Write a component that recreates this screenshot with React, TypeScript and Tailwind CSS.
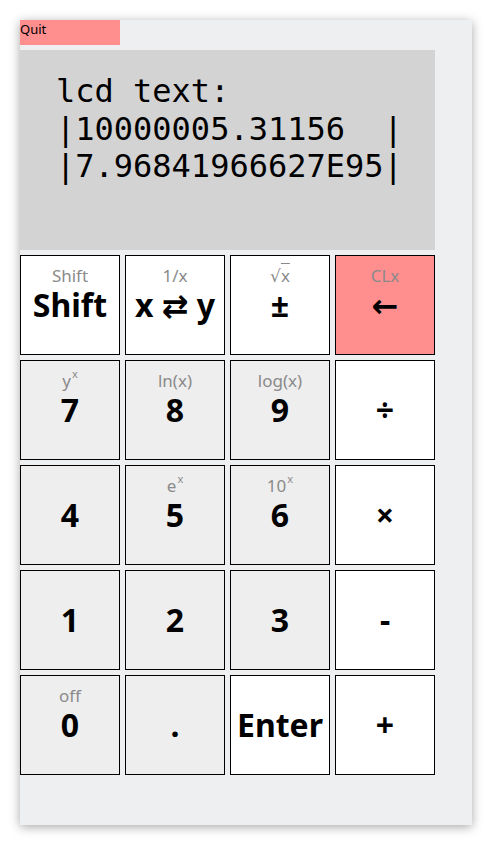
import type { ReactNode } from "react";

type Key = {
  top?: ReactNode;
  label: ReactNode;
  tone: "white" | "gray" | "red";
};

const sup = (base: string) => (
  <>
    {base}
    <sup className="relative -top-[9px] ml-[1px] text-[11px] leading-none">x</sup>
  </>
);

const keys: Key[] = [
  { top: "Shift", label: "Shift", tone: "white" },
  { top: "1/x", label: "x ⇄ y", tone: "white" },
  {
    top: (
      <>
        √<span className="overline">x</span>
      </>
    ),
    label: "±",
    tone: "white",
  },
  { top: "CLx", label: "←", tone: "red" },
  { top: sup("y"), label: "7", tone: "gray" },
  { top: "ln(x)", label: "8", tone: "gray" },
  { top: "log(x)", label: "9", tone: "gray" },
  { label: "÷", tone: "white" },
  { label: "4", tone: "gray" },
  { top: sup("e"), label: "5", tone: "gray" },
  { top: sup("10"), label: "6", tone: "gray" },
  { label: "×", tone: "white" },
  { label: "1", tone: "gray" },
  { label: "2", tone: "gray" },
  { label: "3", tone: "gray" },
  { label: "-", tone: "white" },
  { top: "off", label: "0", tone: "gray" },
  { label: ".", tone: "gray" },
  { label: "Enter", tone: "white" },
  { label: "+", tone: "white" },
];

const toneClass = {
  white: "bg-white",
  gray: "bg-[#eeeeee]",
  red: "bg-[#ff8f8f]",
};

function CalcKey({ k }: { k: Key }) {
  return (
    <button
      className={`grid h-[100px] w-[100px] grid-rows-[1fr_auto_1fr] border border-black ${toneClass[k.tone]}`}
    >
      <span className="self-end text-[17px] leading-[18px] text-[#8a8a8a]">{k.top}</span>
      <span className="text-[32px] font-bold leading-[40px] text-black">{k.label}</span>
      <span />
    </button>
  );
}

export default function App() {
  return (
    <div className="min-h-[846px] bg-white p-[20px] font-['Noto_Sans','DejaVu_Sans',sans-serif]">
      <div className="flex h-[805px] w-[452px] flex-col bg-[#eeeff1] shadow-[0_2px_10px_rgba(0,0,0,0.35)]">
        <button className="h-[25px] w-[100px] bg-[#ff8f8f] text-left align-top text-[13px] leading-[18px] text-black">
          <span className="block h-full">Quit</span>
        </button>
        <div className="mt-[5px] h-[200px] w-[415px] bg-[#d3d3d3] pl-[36px] pt-[23px]">
          <pre className="font-['DejaVu_Sans_Mono',monospace] text-[32px] leading-[37.5px] text-black">
            {"lcd text:\n|10000005.31156  |\n|7.96841966627E95|"}
          </pre>
        </div>
        <div className="mt-[5px] grid grid-cols-[repeat(4,100px)] gap-[5px]">
          {keys.map((k, i) => (
            <CalcKey key={i} k={k} />
          ))}
        </div>
      </div>
    </div>
  );
}
